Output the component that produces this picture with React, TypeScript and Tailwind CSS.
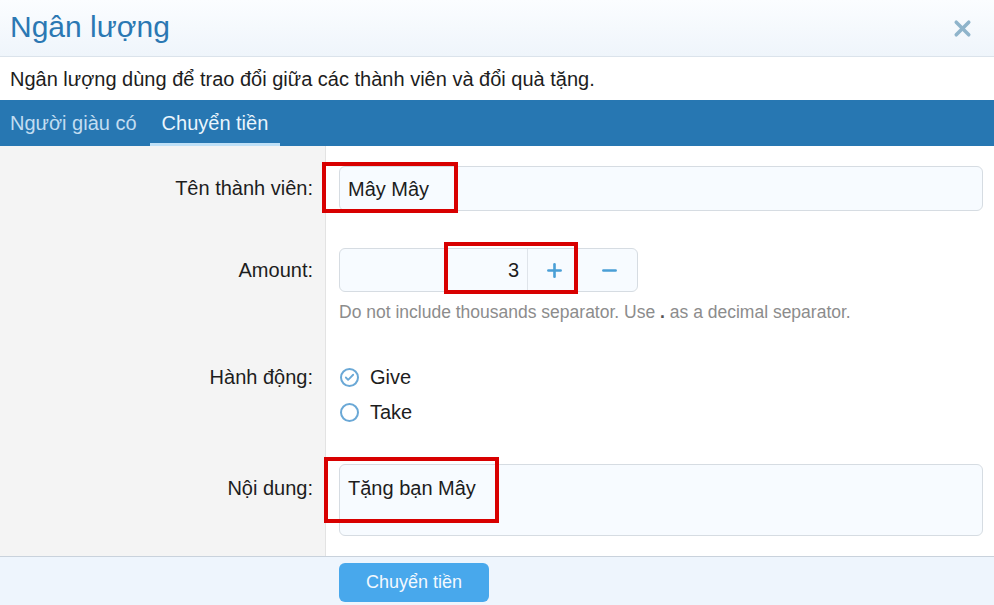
import { X, Plus, Minus, Check } from 'lucide-react';

function RedMark({ className }: { className: string }) {
  return <div className={`pointer-events-none absolute border-[4px] border-[#d80000] ${className}`} />;
}

export default function App() {
  return (
    <div className="w-[994px] h-[605px] overflow-hidden bg-white text-[#1d1d1d] font-['Liberation_Sans',Arial,sans-serif]">
      {/* Header */}
      <div className="h-[57px] flex items-center justify-between pl-[10px] pr-[19px] bg-gradient-to-b from-[#fbfdff] to-[#eff5fb] border-b border-[#dbe3eb]">
        <h1 className="text-[30px] leading-none text-[#2b78b3] -mt-[3px]">Ngân lượng</h1>
        <X className="w-[25px] h-[25px] text-[#8fb4cb]" strokeWidth={3.4} />
      </div>

      {/* Description */}
      <div className="h-[43px] flex items-center px-[10px] text-[20px]">
        Ngân lượng dùng để trao đổi giữa các thành viên và đổi quà tặng.
      </div>

      {/* Tabs */}
      <div className="h-[46px] bg-[#2777b2] flex items-stretch text-[20px]">
        <div className="flex items-center pl-[10px] pr-[13px] text-[#c2ddf1]">Người giàu có</div>
        <div className="flex items-center px-[12px] text-[#eaf5fd] border-b-[3px] border-[#bfe0f7] pt-[3px]">Chuyển tiền</div>
      </div>

      {/* Form */}
      <div className="grid grid-cols-[326px_1fr] text-[20px]">
        {/* Row 1 */}
        <div className="bg-[#f4f4f4] border-r border-[#e3e3e3] pt-[20px] pr-[12px] text-right leading-[45px]">Tên thành viên:</div>
        <div className="pt-[20px] pb-[17px] pl-[13px] pr-[11px]">
          <div className="relative">
            <div className="h-[45px] rounded-[6px] border border-[#d6dce2] bg-[#f7fbff] pl-[8px] flex items-center">Mây Mây</div>
            <RedMark className="-left-[17px] -top-[4px] w-[136px] h-[51px]" />
          </div>
        </div>

        {/* Row 2 */}
        <div className="bg-[#f4f4f4] border-r border-[#e3e3e3] pt-[20px] pr-[12px] text-right leading-[44px]">Amount:</div>
        <div className="pt-[20px] pb-[20px] pl-[13px]">
          <div className="relative w-[299px]">
            <div className="h-[44px] rounded-[6px] border border-[#d6dce2] bg-[#f7fbff] flex">
              <div className="w-[187px] flex items-center justify-end pr-[8px]">3</div>
              <div className="w-[54px] border-l border-[#dfe4ea] flex items-center justify-center text-[#4a9fd6]">
                <Plus className="w-[21px] h-[21px]" strokeWidth={3} />
              </div>
              <div className="flex-1 flex items-center justify-center text-[#4a9fd6]">
                <Minus className="w-[21px] h-[21px]" strokeWidth={3} />
              </div>
            </div>
            <RedMark className="left-[105px] -top-[6px] w-[134px] h-[52px]" />
          </div>
          <p className="mt-[10px] text-[17.5px] leading-[20px] text-[#8c8c8c]">
            Do not include thousands separator. Use <b className="text-[#555]">.</b> as a decimal separator.
          </p>
        </div>

        {/* Row 3 */}
        <div className="bg-[#f4f4f4] border-r border-[#e3e3e3] pt-[22px] pr-[12px] text-right leading-[26px]">Hành động:</div>
        <div className="pt-[22px] pb-[19px] pl-[14px] flex flex-col gap-[9px]">
          <label className="flex items-center gap-[11px] leading-[26px]">
            <span className="w-[19px] h-[19px] rounded-full border-2 border-[#6aa8d6] flex items-center justify-center text-[#6aa8d6]">
              <Check className="w-[11px] h-[11px]" strokeWidth={4} />
            </span>
            Give
          </label>
          <label className="flex items-center gap-[11px] leading-[26px]">
            <span className="w-[19px] h-[19px] rounded-full border-2 border-[#6aa8d6]" />
            Take
          </label>
        </div>

        {/* Row 4 */}
        <div className="bg-[#f4f4f4] border-r border-[#e3e3e3] pt-[31px] pr-[12px] text-right leading-[26px]">Nội dung:</div>
        <div className="pt-[20px] pb-[20px] pl-[13px] pr-[11px]">
          <div className="relative">
            <div className="h-[72px] rounded-[6px] border border-[#d6dce2] bg-[#f7fbff] pl-[8px] pt-[10px] leading-[26px]">Tặng bạn Mây</div>
            <RedMark className="-left-[15px] -top-[7px] w-[175px] h-[66px]" />
          </div>
        </div>
      </div>

      {/* Footer */}
      <div className="h-[49px] border-t border-[#c9d2dc] bg-[#eef5fd] pl-[339px] pt-[6px]">
        <button className="w-[150px] h-[39px] rounded-[6px] bg-[#48a8ec] text-[#f3f9fe] text-[18px]">Chuyển tiền</button>
      </div>
    </div>
  );
}
